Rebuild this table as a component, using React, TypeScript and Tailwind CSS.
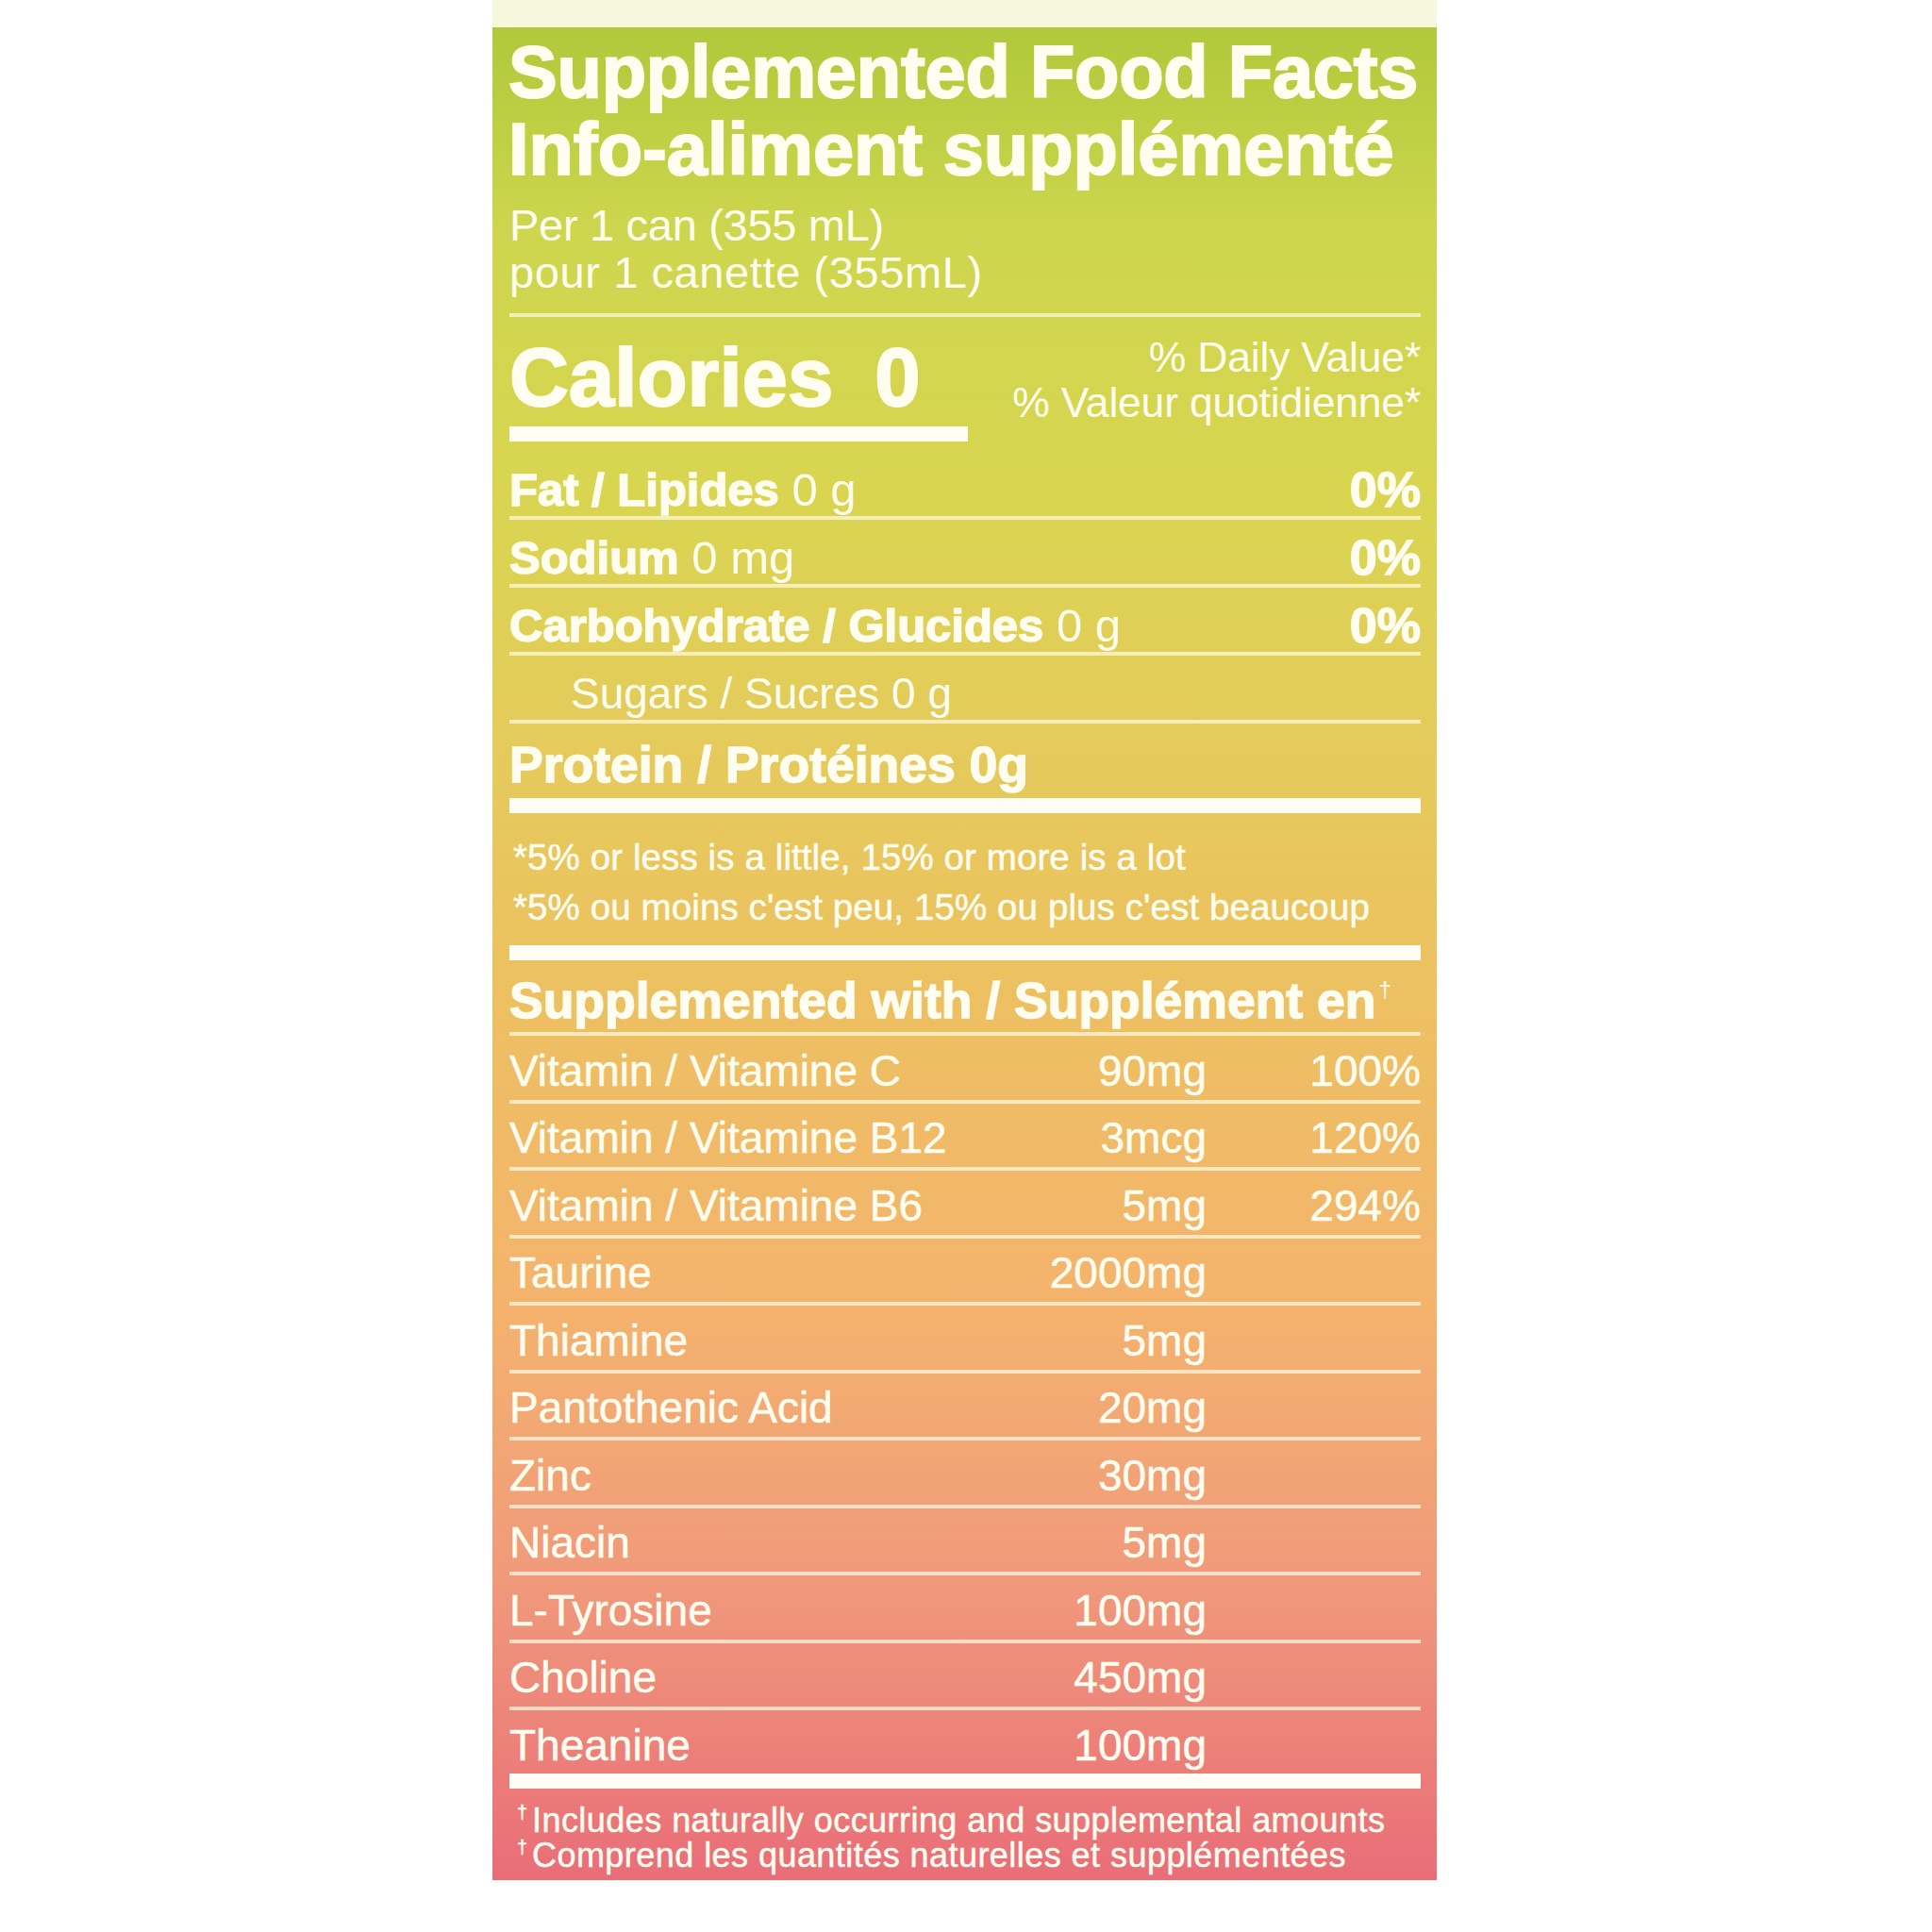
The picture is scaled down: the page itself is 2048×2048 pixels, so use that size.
import React from "react";

const supp: [string, string, string][] = [
  ["Vitamin / Vitamine C", "90mg", "100%"],
  ["Vitamin / Vitamine B12", "3mcg", "120%"],
  ["Vitamin / Vitamine B6", "5mg", "294%"],
  ["Taurine", "2000mg", ""],
  ["Thiamine", "5mg", ""],
  ["Pantothenic Acid", "20mg", ""],
  ["Zinc", "30mg", ""],
  ["Niacin", "5mg", ""],
  ["L-Tyrosine", "100mg", ""],
  ["Choline", "450mg", ""],
  ["Theanine", "100mg", ""],
];

const Thin = () => <div className="h-[4px] w-full shrink-0 bg-[#fffbe6]/70" />;
const Thick = () => <div className="h-[16px] w-full shrink-0 bg-[#fffdf4]" />;

const heavy = "font-bold [-webkit-text-stroke:1.5px_#fffdf0]";
const medium = "font-normal [-webkit-text-stroke:0.5px_#fffdf0]";

export default function App() {
  return (
    <div className="w-[2048px] h-[2048px] bg-white font-['Liberation_Sans',Arial,sans-serif] text-[#fffdf0]">
      <div className="ml-[522px] w-[1001px] flex flex-col">
        <div className="h-[29px] bg-[#f5f8dc]" />
        <div className="h-[1964px] flex flex-col pl-[18px] pr-[17px] pt-[6px] bg-[linear-gradient(180deg,#b0c93a_0%,#cdd64e_11%,#d9d550_25%,#e3cc5a_37%,#ebc35f_49%,#f4b36d_69%,#f0997b_84%,#e96d78_100%)]">
          {/* Title */}
          <div className={`h-[82px] leading-[82px] text-[77.5px] tracking-[-0.2px] whitespace-nowrap -ml-[1px] ${heavy} [-webkit-text-stroke:2px_#fffdf0]`}>
            Supplemented Food Facts
          </div>
          <div className={`h-[82px] leading-[82px] text-[77.5px] whitespace-nowrap -ml-[1px] ${heavy} [-webkit-text-stroke:2px_#fffdf0]`}>
            Info-aliment supplémenté
          </div>
          <div className="mt-[15px] h-[50px] leading-[50px] text-[47px] tracking-[-0.3px] whitespace-nowrap">
            Per 1 can (355 mL)
          </div>
          <div className="h-[50px] leading-[50px] text-[47px] tracking-[0.6px] whitespace-nowrap">
            pour 1 canette (355mL)
          </div>
          <div className="mt-[18px]">
            <Thin />
          </div>

          {/* Calories */}
          <div className="mt-[19px] flex justify-between">
            <div className="flex flex-col w-[486px]">
              <div className={`h-[90px] leading-[90px] text-[87px] whitespace-nowrap ${heavy} [-webkit-text-stroke:2px_#fffdf0]`}>
                Calories<span className="ml-[44px]">0</span>
              </div>
              <div className="mt-[7px] h-[16px] bg-[#fffdf4]" />
            </div>
            <div className="flex flex-col items-end text-[44.5px] tracking-[-0.2px]">
              <div className="h-[48px] leading-[48px] whitespace-nowrap">% Daily Value*</div>
              <div className="h-[48px] leading-[48px] whitespace-nowrap">% Valeur quotidienne*</div>
            </div>
          </div>

          {/* Nutrients */}
          <div className="h-[79px] pt-[23px] flex justify-between leading-[56px] text-[49px] whitespace-nowrap">
            <div>
              <span className={heavy}>Fat / Lipides</span>
              <span className="font-normal"> 0 g</span>
            </div>
            <span className={`text-[52px] ${heavy}`}>0%</span>
          </div>
          <Thin />
          <div className="h-[68px] pt-[12px] flex justify-between leading-[56px] text-[49px] whitespace-nowrap">
            <div>
              <span className={heavy}>Sodium</span>
              <span className="font-normal"> 0 mg</span>
            </div>
            <span className={`text-[52px] ${heavy}`}>0%</span>
          </div>
          <Thin />
          <div className="h-[68px] pt-[12px] flex justify-between leading-[56px] text-[49px] whitespace-nowrap">
            <div>
              <span className={heavy}>Carbohydrate / Glucides</span>
              <span className="font-normal"> 0 g</span>
            </div>
            <span className={`text-[52px] ${heavy}`}>0%</span>
          </div>
          <Thin />
          <div className="h-[68px] pt-[12px] pl-[65px] leading-[56px] text-[46px] whitespace-nowrap font-normal">
            Sugars / Sucres 0 g
          </div>
          <Thin />
          <div className={`h-[79px] pt-[16px] leading-[56px] text-[53.5px] whitespace-nowrap ${heavy}`}>
            Protein / Protéines 0g
          </div>
          <Thick />

          {/* Footnotes */}
          <div className={`pt-[20px] pb-[14px] pl-[4px] text-[38.5px] tracking-[0.1px] leading-[53px] whitespace-nowrap ${medium}`}>
            <div>*5% or less is a little, 15% or more is a lot</div>
            <div>*5% ou moins c'est peu, 15% ou plus c'est beaucoup</div>
          </div>
          <Thick />

          {/* Supplemented with */}
          <div className={`h-[76px] pt-[15px] leading-[56px] text-[53.5px] whitespace-nowrap ${heavy}`}>
            Supplemented with / Supplément en
            <span className="inline-block align-top text-[24px] leading-[24px] font-normal [-webkit-text-stroke:0px] ml-[3px] mt-[4px]">†</span>
          </div>
          <Thin />

          {supp.map(([label, amt, pct], i) => {
            const last = i === supp.length - 1;
            const cls = last
              ? "h-[67px] pt-[9px]"
              : i % 2 === 0
              ? "h-[68px] pt-[9px]"
              : "h-[67px] pt-[8px]";
            return (
              <React.Fragment key={label}>
                <div className={`${cls} flex leading-[56px] text-[46px] whitespace-nowrap ${medium}`}>
                  <div className="w-[560px]">{label}</div>
                  <div className="w-[179px] text-right">{amt}</div>
                  <div className="flex-1 text-right">{pct}</div>
                </div>
                {!last && <Thin />}
              </React.Fragment>
            );
          })}
          <Thick />

          <div className={`pt-[15px] pb-[8px] text-[36px] tracking-[0.45px] leading-[37px] whitespace-nowrap ${medium}`}>
            <div className="flex items-start">
              <span className="text-[20px] leading-[20px] w-[24px] pl-[8px]">†</span>
              <span>Includes naturally occurring and supplemental amounts</span>
            </div>
            <div className="flex items-start">
              <span className="text-[20px] leading-[20px] w-[24px] pl-[8px]">†</span>
              <span>Comprend les quantités naturelles et supplémentées</span>
            </div>
          </div>
        </div>
      </div>
    </div>
  );
}
